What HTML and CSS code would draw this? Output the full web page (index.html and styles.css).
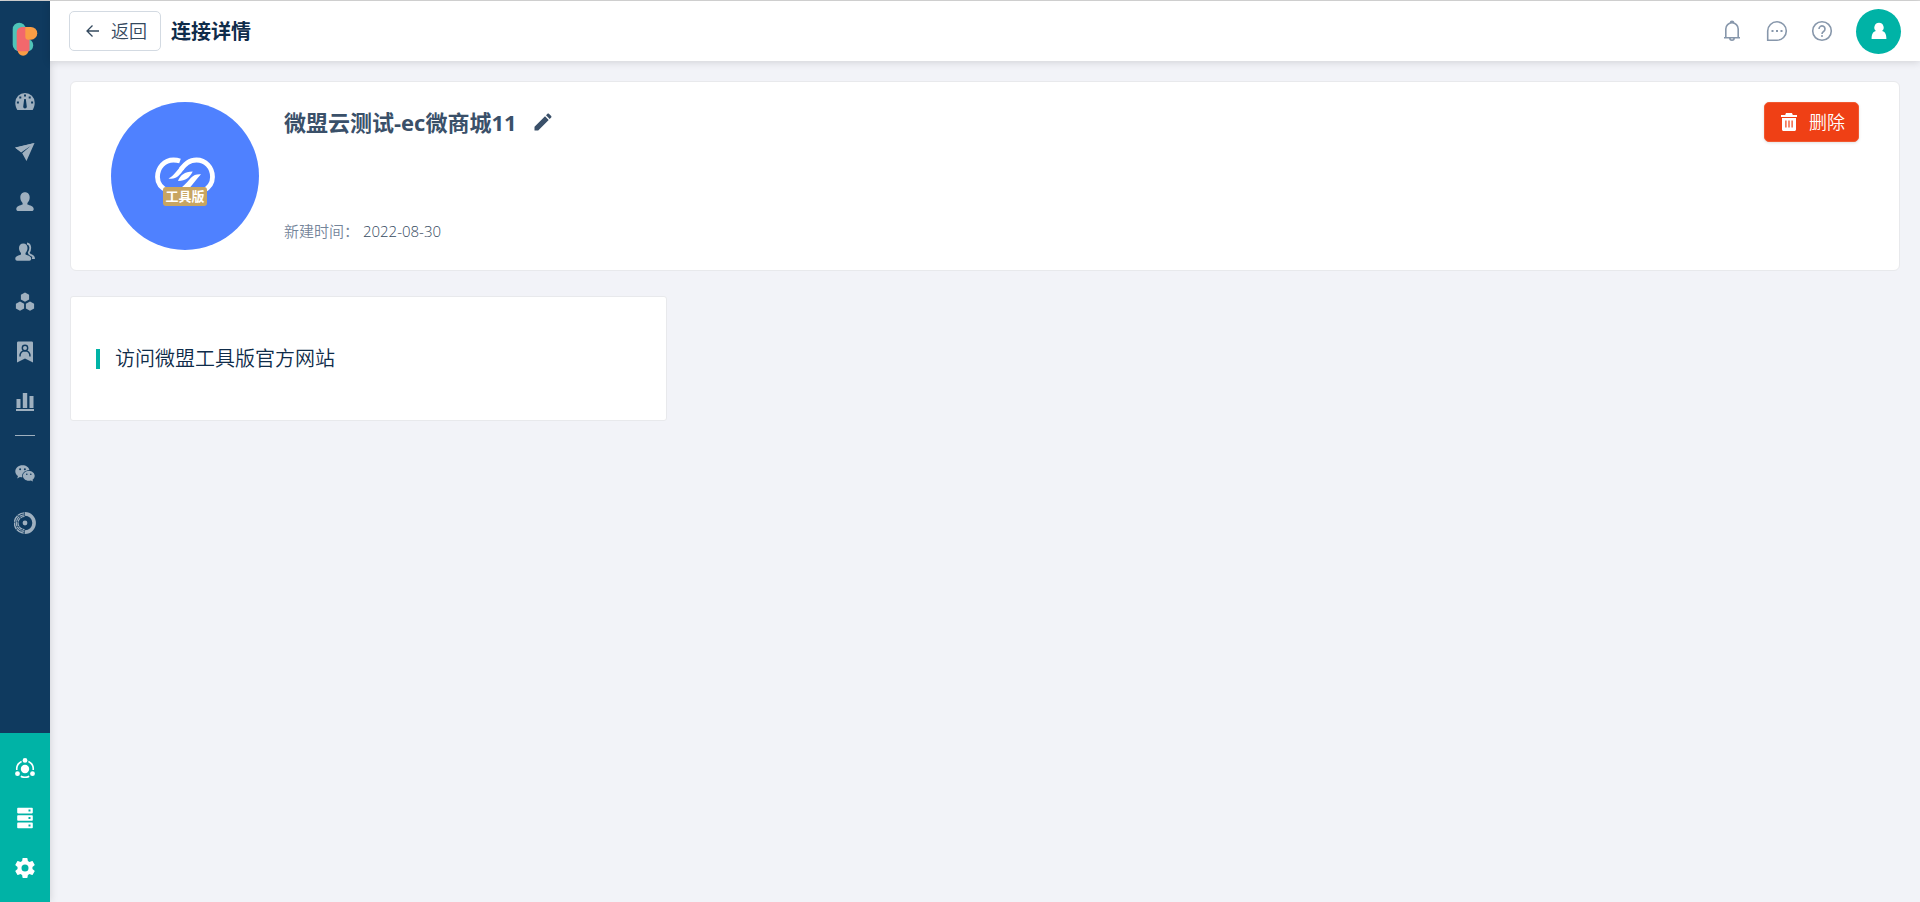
FILE: index.html
```html
<!DOCTYPE html>
<html lang="zh-CN">
<head>
    <meta charset="UTF-8">
    <meta name="viewport" content="width=device-width, initial-scale=1.0">
    <title>连接详情</title>
    <link rel="stylesheet" href="styles.css">
</head>
<body>
    <div class="app">
        <nav class="sidebar">
            <a href="#" class="logo" aria-label="首页">
                <svg width="26" height="34" viewBox="0 0 26 34">
                    <rect x="0.700" y="0.700" width="13" height="28.500" rx="6.500" fill="#4fc3b8"/>
                    <rect x="9" y="17" width="12.200" height="12.500" rx="6" fill="#4fc3b8"/>
                    <rect x="5.600" y="20" width="11" height="13.700" rx="5.500" fill="#f99d45"/>
                    <path d="M10 5h7.500v22.500a1.700 1.700 0 0 1-1.700 1.700H7.200a2.500 2.500 0 0 1-2.500-2.500V10.300A5.300 5.300 0 0 1 10 5z" fill="#f2686c"/>
                    <path d="M13.300 5h5.600a6.300 6.300 0 0 1 0 12.700h-2.600a3 3 0 0 1-3-3z" fill="#f99d45"/>
                </svg>
            </a>

            <a href="#" class="nav-item" aria-label="仪表盘">
                <svg width="20" height="20" viewBox="0 0 20 20">
                    <path fill-rule="evenodd" fill="currentColor" d="M10 1a9.700 9.700 0 0 1 9.700 9.700c0 2.900-.7 5-2 7.300H2.300C1 15.700.3 13.600.3 10.700A9.700 9.700 0 0 1 10 1zM9 2.500v2h2v-2zM4.300 4.500v2h2v-2zM13.700 4.500v2h2v-2zM1.900 9.500v2h2v-2zM16.100 9.500v2h2v-2zM9.200 7l-1 7.800a1.800 1.800 0 1 0 3.600 0L10.800 7z"/>
                </svg>
            </a>
            <a href="#" class="nav-item" aria-label="营销">
                <svg width="20" height="20" viewBox="0 0 20 20">
                    <path fill="currentColor" d="M19.500 1L.2 5.800l5.300 3.800L15.500 4 7.200 11.200l4.300 7.800z"/>
                    <path fill="currentColor" d="M0 5.600L19.500 1 6.200 10.500z"/>
                </svg>
            </a>
            <a href="#" class="nav-item" aria-label="客户">
                <svg width="20" height="20" viewBox="0 0 20 20">
                    <path fill="currentColor" d="M10 .3c3 0 4.700 2.200 4.700 5 0 2.300-.9 4.400-2.300 5.600v1.600c2.500 1 6.300 1.600 6.300 4.400 0 1.500-.8 2.100-2 2.100H3.300c-1.200 0-2-.6-2-2.100 0-2.800 3.800-3.400 6.300-4.400v-1.600C6.200 9.700 5.300 7.600 5.300 5.300c0-2.800 1.700-5 4.700-5z"/>
                </svg>
            </a>
            <a href="#" class="nav-item" aria-label="群组">
                <svg width="20" height="20" viewBox="0 0 20 20">
                    <path fill="currentColor" d="M8.300 1.500c2.700 0 4.200 2 4.200 4.600 0 2-.8 3.900-2 5v1.500c2.200 1 5.700 1.500 5.700 4.100 0 1.300-.7 2-1.800 2H2.100c-1.100 0-1.800-.7-1.800-2 0-2.600 3.500-3.100 5.700-4.100v-1.500c-1.200-1.100-2-3-2-5 0-2.600 1.600-4.600 4.300-4.600z"/>
                    <path fill="none" stroke="currentColor" stroke-width="1.800" d="M12 1.500c3.800.4 4 5.500 1.800 9-.6 3 5.200 2.200 5.200 5.700h-2"/>
                </svg>
            </a>
            <a href="#" class="nav-item" aria-label="产品">
                <svg width="20" height="20" viewBox="0 0 20 20">
                    <g fill="currentColor">
                        <path d="M10 .5l4.100 2.300v4.600L10 9.700 5.900 7.400V2.800z"/>
                        <path d="M5 9.500l4.100 2.300v4.600L5 18.700.9 16.400v-4.600z"/>
                        <path d="M15 9.500l4.100 2.300v4.600L15 18.700l-4.100-2.300v-4.600z"/>
                    </g>
                </svg>
            </a>
            <a href="#" class="nav-item" aria-label="会员">
                <svg width="20" height="22" viewBox="0 0 20 22">
                    <path fill="currentColor" d="M3.500.5h13c.8 0 1.500.5 1.500 1.300v19.700l-8-4-8 4V1.800C2 1 2.700.5 3.500.500z"/>
                    <g fill="none" stroke="#0f3a5f" stroke-width="1.400">
                        <circle cx="10" cy="7" r="2.700"/>
                        <path d="M5 15.500c0-3.500 2-5.800 5-5.800s5 2.300 5 5.800"/>
                    </g>
                </svg>
            </a>
            <a href="#" class="nav-item" aria-label="报表">
                <svg width="20" height="20" viewBox="0 0 20 20">
                    <path fill="currentColor" d="M1.500 7h4v9h-4zM7.800 1h4.400v15H7.800zM14.500 4h4v12h-4zM1 17h18v2H1z"/>
                </svg>
            </a>
            <hr class="divider">
            <a href="#" class="nav-item" aria-label="微信">
                <svg width="20" height="18" viewBox="0 0 20 18">
                    <path fill="currentColor" d="M7.500 1.200c3.600 0 6.500 2 7 5-4-.1-7.300 2.300-7.300 5.500 0 .6.100 1.100.3 1.600-1 0-1.800-.1-2.600-.3L2.200 14.500 3 12C1.400 10.900.3 9.300.3 7.400c0-3.500 3.200-6.200 7.200-6.200z"/>
                    <path fill="currentColor" d="M13.800 6.900c3.300 0 5.900 2.100 5.900 4.900 0 1.600-.9 3-2.200 3.900l.5 1.900-2.100-1.100c-.7.200-1.400.3-2.100.3-3.300 0-5.900-2.200-5.900-5s2.600-4.900 5.900-4.900z"/>
                    <g fill="#0f3a5f">
                        <circle cx="5.100" cy="5.300" r="1"/>
                        <circle cx="9.900" cy="5.300" r="1"/>
                        <circle cx="11.800" cy="10.300" r=".8"/>
                        <circle cx="15.800" cy="10.300" r=".8"/>
                    </g>
                </svg>
            </a>
            <a href="#" class="nav-item" aria-label="数据">
                <svg width="22" height="22" viewBox="0 0 22 22">
                    <g fill="none" stroke="currentColor">
                        <path stroke-width="3.600" d="M11 1.900a9.100 9.100 0 0 1 0 18.200"/>
                        <path stroke-width="1.400" d="M10.500.9a10.100 10.100 0 0 0 0 20.200" stroke-dasharray="7 .6"/>
                        <path stroke-width="1.200" d="M10.500 2.800a8.200 8.200 0 0 0 0 16.400" stroke-dasharray="5 .6"/>
                        <path stroke-width="1.200" d="M10.500 4.500a6.500 6.500 0 0 0 0 13" stroke-dasharray="4 .6"/>
                    </g>
                    <circle cx="11" cy="11" r="2.400" fill="currentColor"/>
                </svg>
            </a>

            <div class="sidebar-bottom">
                <a href="#" class="nav-item" aria-label="连接">
                    <svg width="20" height="20" viewBox="0 0 20 20">
                        <g fill="currentColor">
                            <circle cx="10" cy="11" r="4.200"/>
                            <circle cx="10" cy="2.400" r="2.400"/>
                            <circle cx="2.500" cy="15.700" r="2.400"/>
                            <circle cx="17.500" cy="15.700" r="2.400"/>
                        </g>
                        <path fill="none" stroke="currentColor" stroke-width="1.600" d="M6.600 3.500A8.300 8.300 0 0 0 1.800 12M13.400 3.500a8.300 8.300 0 0 1 4.800 8.500M5.800 18.200a8.600 8.600 0 0 0 8.400 0"/>
                    </svg>
                </a>
                <a href="#" class="nav-item" aria-label="存储">
                    <svg width="20" height="22" viewBox="0 0 20 22">
                        <path fill-rule="evenodd" fill="currentColor" d="M3 .8h14c.5 0 .8.3.8.8v4c0 .5-.3.800-.8.800H3c-.5 0-.8-.3-.8-.8v-4C2.200 1 2.500.8 3 .8zM13.500 2.600v2h2v-2zM3 8.200h14c.5 0 .8.3.8.8v4c0 .5-.3.800-.8.800H3c-.5 0-.8-.3-.8-.8V9c0-.5.3-.8.8-.8zM13.500 10v2h2v-2zM3 15.600h14c.5 0 .8.3.8.8v4c0 .5-.3.800-.8.800H3c-.5 0-.8-.3-.8-.8v-4c0-.5.3-.8.8-.8zM13.500 17.400v2h2v-2z"/>
                    </svg>
                </a>
                <a href="#" class="nav-item" aria-label="设置">
                    <svg width="24" height="24" viewBox="0 0 24 24">
                        <path fill="currentColor" d="M19.430 12.980c.04-.32.07-.64.07-.98s-.03-.66-.07-.98l2.110-1.650c.19-.15.24-.42.12-.64l-2-3.460c-.12-.22-.39-.3-.61-.22l-2.490 1c-.52-.4-1.080-.73-1.690-.98l-.38-2.650A.49.49 0 0 0 14 2h-4c-.25 0-.46.18-.49.42l-.38 2.650c-.61.25-1.170.59-1.690.98l-2.490-1c-.23-.09-.49 0-.61.22l-2 3.460c-.13.22-.07.49.12.64l2.110 1.650c-.04.32-.07.65-.07.98s.03.66.07.98l-2.110 1.650c-.19.15-.24.42-.12.64l2 3.460c.12.22.39.3.61.22l2.490-1c.52.4 1.080.73 1.690.98l.38 2.650c.03.24.24.42.49.42h4c.25 0 .46-.18.49-.42l.38-2.650c.61-.25 1.170-.59 1.690-.98l2.490 1c.23.09.49 0 .61-.22l2-3.460c.12-.22.07-.49-.12-.64l-2.110-1.650zM12 15.500a3.500 3.500 0 1 1 0-7 3.500 3.500 0 0 1 0 7z"/>
                    </svg>
                </a>
            </div>
        </nav>

        <div class="main">
            <header class="header">
                <button type="button" class="btn btn-back">
                    <svg width="16" height="16" viewBox="0 0 16 16">
                        <path fill="none" stroke="currentColor" stroke-width="1.300" d="M14 8H2M7.500 2.500L2 8l5.500 5.500"/>
                    </svg>
                    返回
                </button>
                <h1 class="page-title">连接详情</h1>

                <div class="tools">
                    <button type="button" class="tool" aria-label="通知">
                        <svg width="22" height="22" viewBox="0 0 22 22">
                            <path fill="none" stroke="currentColor" stroke-width="1.600" d="M3 17.800h16M4.800 17.500V9a6.200 6.200 0 0 1 12.400 0v8.500M9.500 2.700a1.500 1.500 0 0 1 3 0M8.800 18a2.200 2.200 0 0 0 4.400 0"/>
                        </svg>
                    </button>
                    <button type="button" class="tool" aria-label="消息">
                        <svg width="22" height="22" viewBox="0 0 22 22">
                            <path fill="none" stroke="currentColor" stroke-width="1.600" d="M1.700 20.200V11A9.300 9.200 0 1 1 11 20.200z"/>
                            <path fill="currentColor" d="M5.500 10h2v2h-2zM10 10h2v2h-2zM14.500 10h2v2h-2z"/>
                        </svg>
                    </button>
                    <button type="button" class="tool" aria-label="帮助">
                        <svg width="22" height="22" viewBox="0 0 22 22">
                            <g fill="none" stroke="currentColor" stroke-width="1.600">
                                <circle cx="11" cy="11" r="9.300"/>
                                <path d="M8 9a3 3 0 1 1 4.600 2.500c-1.100.7-1.600 1.200-1.600 2.500"/>
                            </g>
                            <circle cx="11" cy="15.900" r="1" fill="currentColor"/>
                        </svg>
                    </button>
                    <button type="button" class="avatar" aria-label="我的账号">
                        <svg width="16" height="18" viewBox="0 0 16 18">
                            <path fill="#fff" d="M8 .8a4.700 4.700 0 0 1 3 8.300c2.700.5 4.400 2.800 4.400 7.900H.6c0-5.100 1.700-7.400 4.400-7.900A4.700 4.700 0 0 1 8 .8z"/>
                        </svg>
                    </button>
                </div>
            </header>

            <main class="content">
                <section class="card profile">
                    <div class="app-icon">
                        <svg class="app-logo" width="62" height="44" viewBox="0 0 62 44">
                            <path fill="none" stroke="#fff" stroke-width="4.800" d="M14 37C7 34 3.500 29 3.500 23 3.500 13.500 10.500 6 19.500 6c2.500 0 4.500.300 6.500 1"/>
                            <path fill="none" stroke="#fff" stroke-width="4.800" d="M27 15C31 10.500 35 6 42.500 6c9 0 16 7.500 16 17 0 6-3.500 11-9.500 14"/>
                            <g fill="#fff">
                                <path d="M14.500 24.500c3.500-1.500 6-4.500 11.500-11.500l4.500 1.800C24.500 22.500 22.500 25.500 14.500 24.500z"/>
                                <path d="M24 27c2-5.500 6.500-9.500 14.700-9.500C35.500 23.500 32 27 24 27z"/>
                                <path d="M27 34c4.500-3.500 7-7 10-10.200 2.700-2.800 5.500-3.800 10-3.500-5 5-8.500 11-13.500 15.700z"/>
                            </g>
                        </svg>
                        <span class="app-badge">工具版</span>
                    </div>
                    <div class="profile-info">
                        <div class="profile-name">
                            <h2>微盟云测试-ec微商城11</h2>
                            <button type="button" class="btn-edit" aria-label="编辑">
                                <svg width="18" height="18" viewBox="0 0 18 18">
                                    <path fill="currentColor" d="M.5 13.800L11 3.300l3.700 3.700L4.200 17.500H.500zM12 2.300L13.500.8c.4-.4 1-.4 1.400 0l2.300 2.300c.4.4.4 1 0 1.400L15.700 6z"/>
                                </svg>
                            </button>
                        </div>
                        <p class="created"><span>新建时间：</span> 2022-08-30</p>
                    </div>
                    <button type="button" class="btn btn-delete">
                        <svg width="16" height="18" viewBox="0 0 16 18">
                            <path fill-rule="evenodd" fill="currentColor" d="M5 0h6l.8 2H16v2H0V2h4.200zM1 5h14v11.500c0 .8-.7 1.500-1.500 1.500h-11C1.700 18 1 17.300 1 16.500zM4.300 7.500v7h1.200v-7zM7.400 7.500v7h1.200v-7zM10.500 7.500v7h1.200v-7z"/>
                        </svg>
                        删除
                    </button>
                </section>

                <div class="link-grid">
                    <section class="link-card">
                        <a href="#">访问微盟工具版官方网站</a>
                    </section>
                </div>
            </main>
        </div>
    </div>
</body>
</html>
```
FILE: styles.css
```css
* {
    box-sizing: border-box;
}
body {
    margin: 0;
    background: #f2f3f8;
    color: #34495e;
    font-family: "Open Sans", "Noto Sans CJK SC", sans-serif;
    font-size: 15px;
    font-weight: 350;
}
h1, h2, p {
    margin: 0;
}
a {
    color: inherit;
    text-decoration: none;
}
button {
    font-family: inherit;
    font-weight: 350;
    cursor: pointer;
}
svg {
    display: block;
    flex: none;
}

.app {
    display: flex;
    min-height: 100vh;
    border-top: 1px solid #dadada;
}

/* sidebar */
.sidebar {
    display: flex;
    flex-direction: column;
    flex: none;
    width: 50px;
    background: #0f3a5f;
    color: #9fb0bf;
    box-shadow: 0 0 8px rgba(0, 0, 0, 0.15);
}
.logo, .nav-item {
    display: flex;
    align-items: center;
    justify-content: center;
}
.logo {
    height: 76px;
}
.nav-item {
    height: 50px;
}
.divider {
    width: 20px;
    margin: 8px auto 12px;
    border: 0;
    border-top: 1px solid #9fb0bf;
}
.sidebar-bottom {
    margin-top: auto;
    padding: 10px 0 9px;
    background: #00b3a6;
    color: #fff;
}

/* header */
.main {
    flex: 1;
    min-width: 0;
}
.header {
    display: flex;
    align-items: center;
    height: 60px;
    padding: 0 19px;
    background: #fff;
    box-shadow: 0 1px 8px rgba(0, 0, 0, 0.15);
}
.btn {
    display: flex;
    align-items: center;
    height: 40px;
    padding: 0 13px 0 16px;
    border: 1px solid #d3dae2;
    border-radius: 5px;
    font-size: 18px;
    line-height: 24px;
}
.btn-back {
    gap: 10px;
    padding-left: 15px;
    background: #fff;
    color: #34495e;
}
.page-title {
    margin-left: 10px;
    padding-top: 2px;
    color: #0f2c4a;
    font-size: 20px;
    line-height: 28px;
}
.tools {
    display: flex;
    align-items: center;
    gap: 23px;
    margin-left: auto;
}
.tool, .avatar {
    display: flex;
    align-items: center;
    justify-content: center;
    padding: 0;
    border: 0;
    background: none;
    color: #8797ab;
}
.avatar {
    width: 45px;
    height: 45px;
    border-radius: 50%;
    background: #00b3a6;
}

/* content */
.content {
    padding: 20px;
}
.card, .link-card {
    background: #fff;
    border: 1px solid #e8e9ec;
    border-radius: 6px;
}
.profile {
    display: flex;
    align-items: flex-start;
    padding: 20px 40px;
}
.app-icon {
    position: relative;
    display: flex;
    align-items: center;
    justify-content: center;
    flex: none;
    width: 148px;
    height: 148px;
    border-radius: 50%;
    background: #4f81ff;
}
.app-badge {
    position: absolute;
    top: 85px;
    left: 52px;
    width: 44px;
    border-radius: 3px;
    background: #c8a561;
    color: #fff;
    font-size: 13px;
    font-weight: bold;
    line-height: 19px;
    text-align: center;
}
.profile-info {
    display: flex;
    flex-direction: column;
    justify-content: space-between;
    flex: 1;
    height: 148px;
    padding: 3px 0 7px 25px;
}
.profile-name {
    display: flex;
    align-items: center;
    gap: 17px;
}
.profile-name h2 {
    color: #3a5069;
    font-size: 22px;
    line-height: 34px;
}
.btn-edit {
    padding: 0;
    border: 0;
    background: none;
    color: #3a5069;
}
.created {
    line-height: 24px;
}
.created span {
    color: #74859a;
}
.btn-delete {
    gap: 12px;
    background: #ef4015;
    border-color: #f2582f;
    color: #fff;
    box-shadow: 0 1px 3px rgba(0, 0, 0, 0.12);
}
.link-grid {
    display: grid;
    grid-template-columns: repeat(3, 1fr);
    gap: 20px;
    margin-top: 25px;
}
.link-card {
    padding: 52px 25px 51px;
    border-radius: 3px;
}
.link-card a {
    display: block;
    padding-left: 15px;
    border-left: 4px solid #00b3a6;
    color: #0f2c4a;
    font-size: 20px;
    line-height: 20px;
}
```
